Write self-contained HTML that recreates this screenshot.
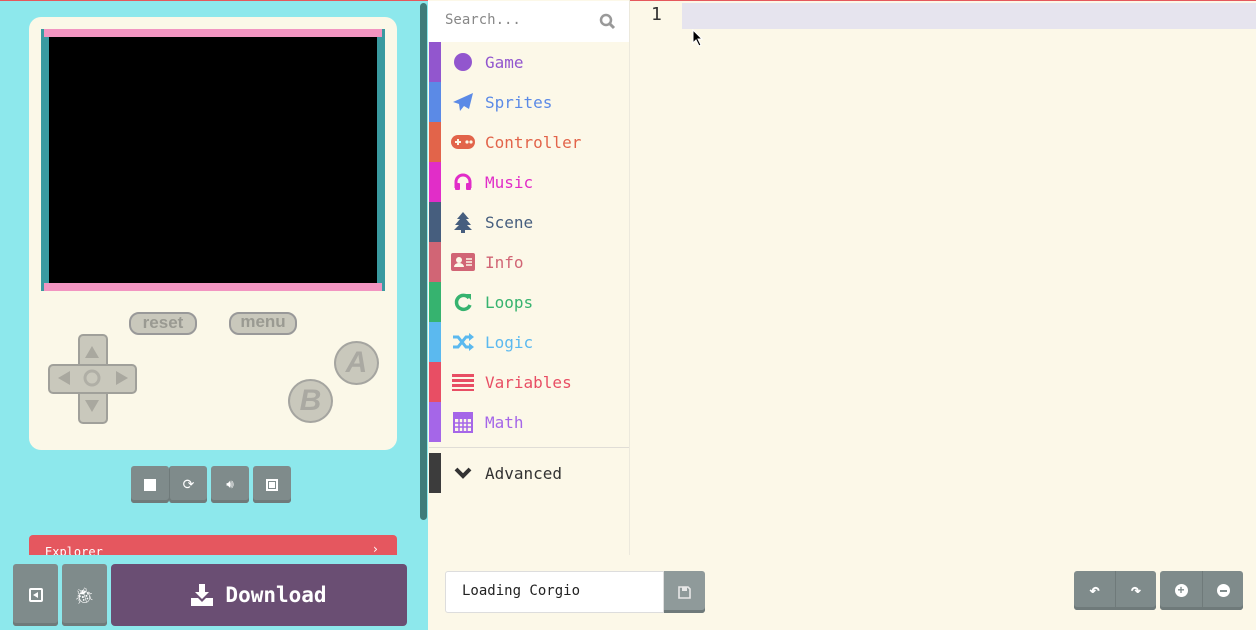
<!DOCTYPE html><html><head><meta charset="utf-8"><style>
*{box-sizing:border-box;margin:0;padding:0}
body{width:1256px;height:630px;overflow:hidden;background:#fcf8e8;font-family:"DejaVu Sans Mono","Liberation Mono",monospace;position:relative}
.a{position:absolute}
.gb{position:absolute;background:#7f8b8b;border-radius:3px;box-shadow:inset 0 -3px 0 #6f7a7a;display:flex;align-items:center;justify-content:center;color:#fff}
.cat{position:absolute;left:429px;width:200px;height:40px;display:flex;align-items:center;font-size:16px}
.cat .s{width:12px;height:40px}
.cat .i{width:44px;display:flex;justify-content:center}
</style></head><body>
<div class="a" style="left:0;top:0;width:428px;height:630px;background:#8de8ec"></div>
<div class="a" style="left:0;top:0;width:1256px;height:1px;background:#e5585c"></div>
<div class="a" style="left:420px;top:3px;width:7px;height:517px;background:#3f7c7a;border-radius:4px"></div>
<!-- card -->
<div class="a" style="left:29px;top:17px;width:368px;height:433px;background:#fbf8e8;border-radius:12px"></div>
<div class="a" style="left:41px;top:29px;width:344px;height:262px;background:#3a9aa0"></div>
<div class="a" style="left:44px;top:29px;width:338px;height:8px;background:#f295c1"></div>
<div class="a" style="left:44px;top:283px;width:338px;height:8px;background:#f295c1"></div>
<div class="a" style="left:49px;top:37px;width:328px;height:246px;background:#000"></div>
<!-- reset/menu -->
<div class="a" style="left:129px;top:312px;width:68px;height:23px;border:2px solid #999;border-radius:10px;background:#c9c8bc;color:#9a9a92;font:bold 17px 'Liberation Sans',sans-serif;text-align:center;line-height:18px">reset</div>
<div class="a" style="left:229px;top:312px;width:68px;height:23px;border:2px solid #999;border-radius:10px;background:#c9c8bc;color:#9a9a92;font:bold 17px 'Liberation Sans',sans-serif;text-align:center;line-height:16px">menu</div>
<!-- dpad -->
<div class="a" style="left:78px;top:334px;width:30px;height:90px;background:#c9c8bc;border:2px solid #a0a09a;border-radius:5px"></div>
<div class="a" style="left:48px;top:364px;width:89px;height:30px;background:#c9c8bc;border:2px solid #a0a09a;border-radius:5px"></div>
<div class="a" style="left:80px;top:366px;width:26px;height:26px;background:#c9c8bc"></div>
<svg class="a" style="left:48px;top:334px" width="90" height="90"><g fill="#a9a89f"><path d="M37 24 44 12 51 24Z"/><path d="M37 66 44 78 51 66Z"/><path d="M10 44 22 37 22 51Z"/><path d="M80 44 68 37 68 51Z"/></g><circle cx="44" cy="44" r="7" fill="none" stroke="#b0afa6" stroke-width="3"/></svg>
<div class="a" style="left:334px;top:341px;width:45px;height:44px;border-radius:50%;background:#c9c8bc;border:2px solid #a5a5a0;color:#aaa9a2;font:italic bold 30px 'Liberation Sans',sans-serif;text-align:center;line-height:40px">A</div>
<div class="a" style="left:288px;top:379px;width:45px;height:44px;border-radius:50%;background:#c9c8bc;border:2px solid #a5a5a0;color:#aaa9a2;font:italic bold 30px 'Liberation Sans',sans-serif;text-align:center;line-height:40px">B</div>
<!-- sim buttons -->
<div class="gb" style="left:131px;top:466px;width:38px;height:37px"><div style="width:12px;height:12px;background:#fff"></div></div>
<div class="gb" style="left:169px;top:466px;width:38px;height:37px;border-left:1px solid #6f7a7a;font-size:14px">⟳</div>
<div class="gb" style="left:211px;top:466px;width:38px;height:37px;font-size:12px">🔊︎</div>
<div class="gb" style="left:253px;top:466px;width:38px;height:37px"><div style="width:12px;height:12px;border:2px dashed #fff;padding:1px"><div style="width:6px;height:6px;background:#fff"></div></div></div>
<!-- explorer -->
<div class="a" style="left:29px;top:535px;width:368px;height:20px;background:#e5575f;border-radius:4px 4px 0 0;color:#fff;font-size:12px;padding:11px 0 0 16px;overflow:hidden;line-height:12px">Explorer<span style="position:absolute;right:18px;top:8px">›</span></div>
<div class="gb" style="left:13px;top:564px;width:45px;height:62px"><div style="width:14px;height:14px;border:2px solid #fff;border-radius:2px;position:relative"><div style="position:absolute;left:2px;top:2px;border-right:5px solid #fff;border-top:3px solid transparent;border-bottom:3px solid transparent"></div></div></div>
<div class="gb" style="left:62px;top:564px;width:45px;height:62px;font-size:16px">🐞︎</div>
<div class="a" style="left:111px;top:564px;width:296px;height:62px;background:#6a4e73;border-radius:4px;color:#fff;font:bold 21px 'DejaVu Sans Mono',monospace;display:flex;align-items:center;justify-content:center;gap:12px"><svg width="22" height="22" viewBox="0 0 22 22"><path d="M8 0h6v8h4l-7 7-7-7h4z" fill="#fff"/><path d="M0 14h7l4 4 4-4h7v8H0z" fill="#fff"/></svg>Download</div>
<!-- toolbox -->
<div class="a" style="left:428px;top:0;width:202px;height:555px;background:#fcf8e8;border-right:1px solid #ece9dd"></div>
<div class="a" style="left:428px;top:1px;width:201px;height:41px;background:#fff;color:#888;font-size:14px;padding:11px 0 0 17px">Search...</div>
<svg class="a" style="left:599px;top:13px" width="17" height="17"><circle cx="7" cy="7" r="5" fill="none" stroke="#999" stroke-width="2.5"/><path d="M11 11 15 15" stroke="#999" stroke-width="3"/></svg>
<div class="cat" style="top:42px;color:#9256ce"><div class="s" style="background:#9256ce"></div><div class="i"><div style="width:18px;height:18px;border-radius:50%;background:#9256ce"></div></div>Game</div>
<div class="cat" style="top:82px;color:#5b8ae6"><div class="s" style="background:#5b8ae6"></div><div class="i"><svg width="22" height="20"><path d="M21 1 1 10 7 12 8 19 12 14 17 17Z" fill="#5b8ae6"/></svg></div>Sprites</div>
<div class="cat" style="top:122px;color:#e2644a"><div class="s" style="background:#e2644a"></div><div class="i"><svg width="24" height="14"><rect width="24" height="14" rx="7" fill="#e2644a"/><path d="M4 7h6M7 4v6" stroke="#fcf8e8" stroke-width="2"/><circle cx="16" cy="7" r="1.6" fill="#fcf8e8"/><circle cx="20" cy="7" r="1.6" fill="#fcf8e8"/></svg></div>Controller</div>
<div class="cat" style="top:162px;color:#e12dc8"><div class="s" style="background:#e12dc8"></div><div class="i"><svg width="20" height="20"><path d="M3 16V10a7 7 0 0 1 14 0v6" fill="none" stroke="#e12dc8" stroke-width="3"/><rect x="2" y="11" width="5" height="7" rx="1" fill="#e12dc8"/><rect x="13" y="11" width="5" height="7" rx="1" fill="#e12dc8"/></svg></div>Music</div>
<div class="cat" style="top:202px;color:#465e7e"><div class="s" style="background:#465e7e"></div><div class="i"><svg width="20" height="22"><path d="M10 1 4 8h3L2 14h4L1 19h18l-5-5h4l-5-6h3Z" fill="#465e7e"/><rect x="8" y="18" width="4" height="4" fill="#465e7e"/></svg></div>Scene</div>
<div class="cat" style="top:242px;color:#d16575"><div class="s" style="background:#d16575"></div><div class="i"><svg width="24" height="18"><rect width="24" height="18" rx="2" fill="#d16575"/><circle cx="8" cy="7" r="3" fill="#fcf8e8"/><path d="M3 14a5 4 0 0 1 10 0z" fill="#fcf8e8"/><path d="M15 6h6M15 9h6M15 12h6" stroke="#fcf8e8" stroke-width="1.5"/></svg></div>Info</div>
<div class="cat" style="top:282px;color:#36b36f"><div class="s" style="background:#36b36f"></div><div class="i"><svg width="20" height="20"><path d="M16 6A7 7 0 1 0 17 13" fill="none" stroke="#36b36f" stroke-width="3.5"/><path d="M12 2h6v6z" fill="#36b36f"/></svg></div>Loops</div>
<div class="cat" style="top:322px;color:#5bb9ef"><div class="s" style="background:#5bb9ef"></div><div class="i"><svg width="22" height="18"><path d="M1 4h5l8 10h4M1 14h5l8-10h4" fill="none" stroke="#5bb9ef" stroke-width="3"/><path d="M17 0 22 4 17 8zM17 10l5 4-5 4z" fill="#5bb9ef"/></svg></div>Logic</div>
<div class="cat" style="top:362px;color:#e84e64"><div class="s" style="background:#e84e64"></div><div class="i"><svg width="22" height="18"><g fill="#e84e64"><rect y="1" width="22" height="3"/><rect y="6" width="22" height="3"/><rect y="11" width="22" height="3"/><rect y="16" width="22" height="2"/></g></svg></div>Variables</div>
<div class="cat" style="top:402px;color:#a566e8"><div class="s" style="background:#a566e8"></div><div class="i"><svg width="20" height="21"><rect x="1" y="1" width="18" height="19" fill="none" stroke="#a566e8" stroke-width="2"/><rect x="1" y="1" width="18" height="6" fill="#a566e8"/><path d="M1 11h18M1 15h18M6 7v13M10 7v13M14 7v13" stroke="#a566e8" stroke-width="1.5"/></svg></div>Math</div>
<div class="a" style="left:429px;top:447px;width:200px;height:1px;background:#e0ddd6"></div>
<div class="cat" style="top:453px;color:#333"><div class="s" style="background:#3c3c3c"></div><div class="i"><svg width="18" height="12"><path d="M2 2 9 9 16 2" fill="none" stroke="#333" stroke-width="4"/></svg></div>Advanced</div>
<!-- editor -->
<div class="a" style="left:651px;top:4px;color:#333;font-size:18px">1</div>
<div class="a" style="left:682px;top:3px;width:574px;height:26px;background:#e6e4ee"></div>
<svg class="a" style="left:692px;top:29px" width="12" height="18"><path d="M1 1v13l3-3 3 6 2-1-3-6h4z" fill="#000" stroke="#fff" stroke-width="1"/></svg>
<div class="a" style="left:445px;top:571px;width:219px;height:42px;background:#fff;border:1px solid #ddd;border-radius:3px 0 0 3px;font-size:14px;color:#222;padding:11px 0 0 16px">Loading Corgio</div>
<div class="gb" style="left:664px;top:571px;width:41px;height:42px;border-radius:0 3px 3px 0;background:#8f9a9a"><svg width="13" height="13"><path d="M1 1h9l2 2v9H1z" fill="none" stroke="#e8e8e8" stroke-width="1.6"/><rect x="4" y="1" width="5" height="4" fill="#e8e8e8"/></svg></div>
<div class="gb" style="left:1074px;top:571px;width:41px;height:39px;border-radius:3px 0 0 3px;font-size:18px;font-weight:bold">↶</div>
<div class="gb" style="left:1115px;top:571px;width:41px;height:39px;border-left:1px solid #6f7a7a;border-radius:0 3px 3px 0;font-size:18px;font-weight:bold">↷</div>
<div class="gb" style="left:1160px;top:571px;width:42px;height:39px;border-radius:3px 0 0 3px"><div style="width:13px;height:13px;border-radius:50%;background:#fff;color:#7f8b8b;font:bold 12px/13px sans-serif;text-align:center">+</div></div>
<div class="gb" style="left:1202px;top:571px;width:41px;height:39px;border-left:1px solid #6f7a7a;border-radius:0 3px 3px 0"><div style="width:13px;height:13px;border-radius:50%;background:#fff;display:flex;align-items:center;justify-content:center"><div style="width:7px;height:2px;background:#7f8b8b"></div></div></div>
</body></html>
